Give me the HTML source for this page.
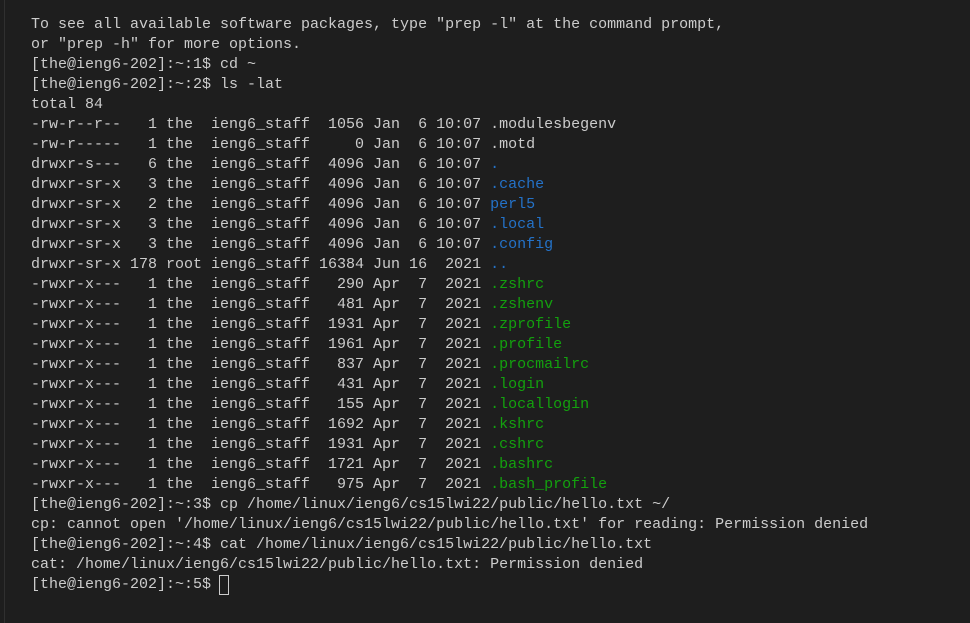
<!DOCTYPE html>
<html><head><meta charset="utf-8"><style>
html,body{margin:0;padding:0;background:#1e1e1e;width:970px;height:623px;overflow:hidden}
.bl{position:absolute;left:4px;top:0;width:1px;height:623px;background:#303030}
pre{position:absolute;left:31px;top:15px;margin:0;font-family:"Liberation Mono",monospace;font-size:15px;line-height:20px;color:#cccccc;letter-spacing:0}
.b{color:#2472c8}.g{color:#13a10e}
.c{position:absolute;left:219px;top:575px;width:8px;height:18px;border:1px solid #cccccc}
</style></head><body><div class="bl"></div><pre>To see all available software packages, type "prep -l" at the command prompt,
or "prep -h" for more options.
[the@ieng6-202]:~:1$ cd ~
[the@ieng6-202]:~:2$ ls -lat
total 84
-rw-r--r--   1 the  ieng6_staff  1056 Jan  6 10:07 .modulesbegenv
-rw-r-----   1 the  ieng6_staff     0 Jan  6 10:07 .motd
drwxr-s---   6 the  ieng6_staff  4096 Jan  6 10:07 <span class="b">.</span>
drwxr-sr-x   3 the  ieng6_staff  4096 Jan  6 10:07 <span class="b">.cache</span>
drwxr-sr-x   2 the  ieng6_staff  4096 Jan  6 10:07 <span class="b">perl5</span>
drwxr-sr-x   3 the  ieng6_staff  4096 Jan  6 10:07 <span class="b">.local</span>
drwxr-sr-x   3 the  ieng6_staff  4096 Jan  6 10:07 <span class="b">.config</span>
drwxr-sr-x 178 root ieng6_staff 16384 Jun 16  2021 <span class="b">..</span>
-rwxr-x---   1 the  ieng6_staff   290 Apr  7  2021 <span class="g">.zshrc</span>
-rwxr-x---   1 the  ieng6_staff   481 Apr  7  2021 <span class="g">.zshenv</span>
-rwxr-x---   1 the  ieng6_staff  1931 Apr  7  2021 <span class="g">.zprofile</span>
-rwxr-x---   1 the  ieng6_staff  1961 Apr  7  2021 <span class="g">.profile</span>
-rwxr-x---   1 the  ieng6_staff   837 Apr  7  2021 <span class="g">.procmailrc</span>
-rwxr-x---   1 the  ieng6_staff   431 Apr  7  2021 <span class="g">.login</span>
-rwxr-x---   1 the  ieng6_staff   155 Apr  7  2021 <span class="g">.locallogin</span>
-rwxr-x---   1 the  ieng6_staff  1692 Apr  7  2021 <span class="g">.kshrc</span>
-rwxr-x---   1 the  ieng6_staff  1931 Apr  7  2021 <span class="g">.cshrc</span>
-rwxr-x---   1 the  ieng6_staff  1721 Apr  7  2021 <span class="g">.bashrc</span>
-rwxr-x---   1 the  ieng6_staff   975 Apr  7  2021 <span class="g">.bash_profile</span>
[the@ieng6-202]:~:3$ cp /home/linux/ieng6/cs15lwi22/public/hello.txt ~/
cp: cannot open '/home/linux/ieng6/cs15lwi22/public/hello.txt' for reading: Permission denied
[the@ieng6-202]:~:4$ cat /home/linux/ieng6/cs15lwi22/public/hello.txt
cat: /home/linux/ieng6/cs15lwi22/public/hello.txt: Permission denied
[the@ieng6-202]:~:5$ </pre><div class="c"></div></body></html>
